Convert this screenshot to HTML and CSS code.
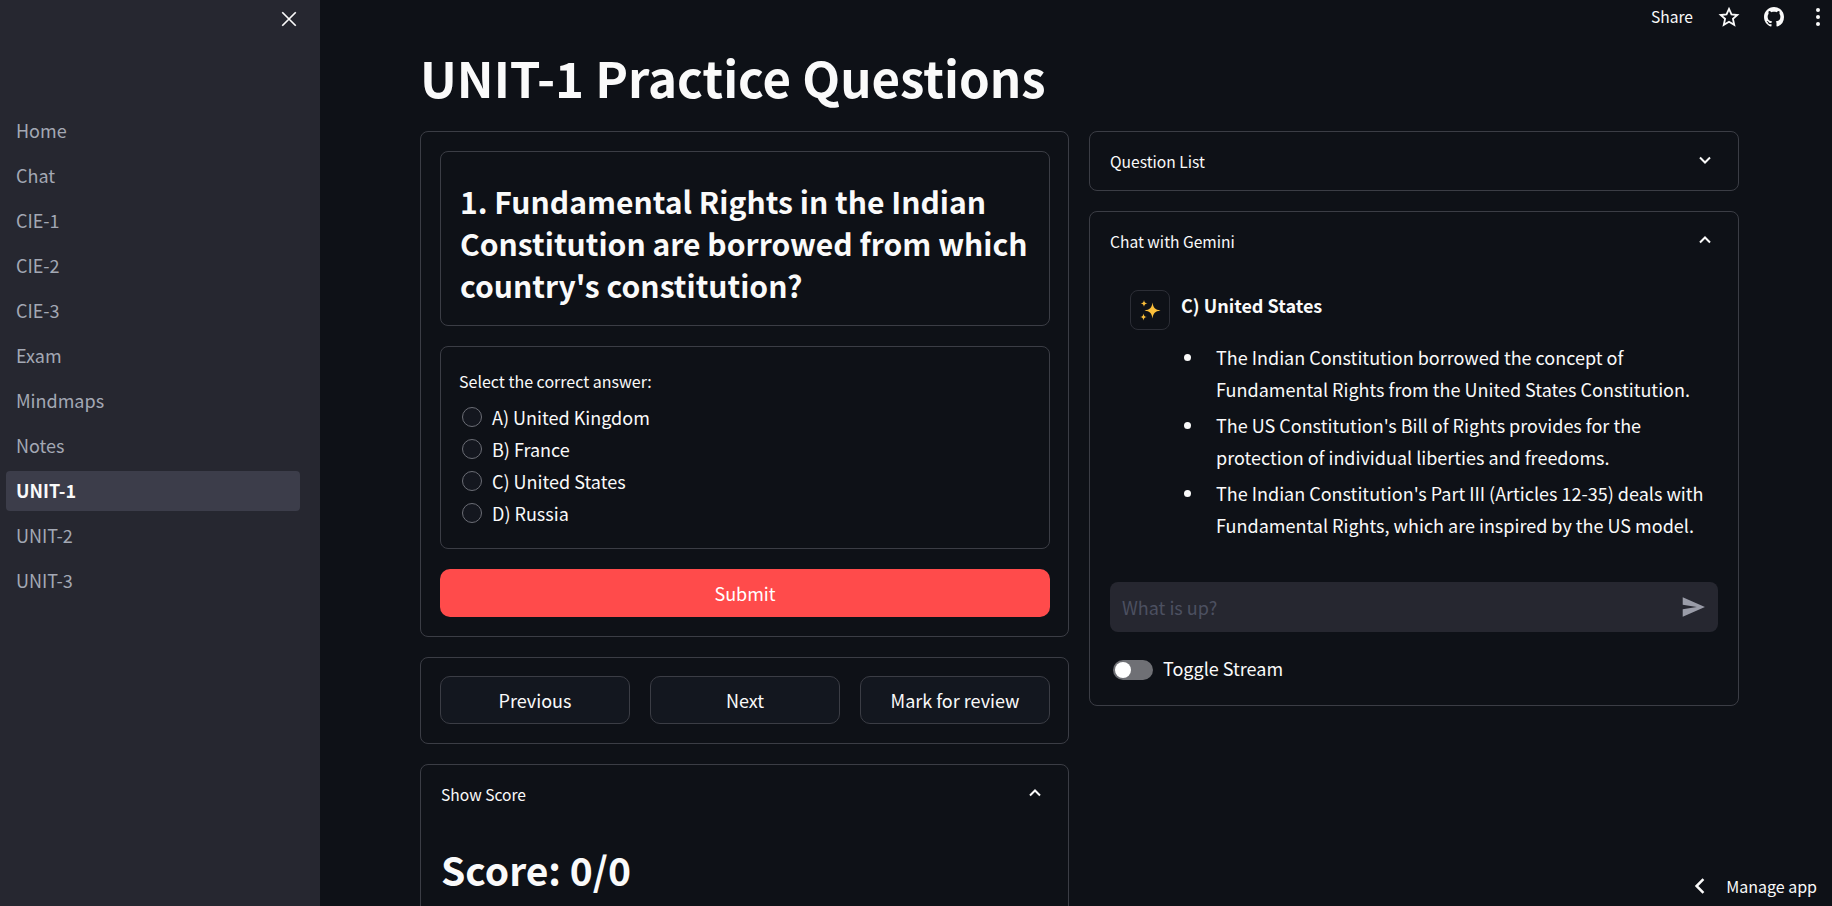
FILE: index.html
```html
<!DOCTYPE html>
<html lang="en">
<head>
    <meta charset="UTF-8">
    <title>UNIT-1 Practice Questions</title>
    <link rel="stylesheet" href="styles.css">
</head>
<body>

    <!-- Sidebar -->
    <aside class="sidebar">
        <div class="sidebar-top">
            <svg class="close-icon" viewBox="0 0 16 16"><path d="M2 2 L14 14 M14 2 L2 14"/></svg>
        </div>
        <nav class="nav">
            <a class="nav-item">Home</a>
            <a class="nav-item">Chat</a>
            <a class="nav-item">CIE-1</a>
            <a class="nav-item">CIE-2</a>
            <a class="nav-item">CIE-3</a>
            <a class="nav-item">Exam</a>
            <a class="nav-item">Mindmaps</a>
            <a class="nav-item">Notes</a>
            <a class="nav-item active">UNIT-1</a>
            <a class="nav-item">UNIT-2</a>
            <a class="nav-item">UNIT-3</a>
        </nav>
    </aside>

    <!-- Top right toolbar -->
    <div class="toolbar">
        <span class="share">Share</span>
        <svg class="star-icon" viewBox="0 0 24 24"><path d="M12 3.2l2.7 5.9 6.4.7-4.8 4.3 1.4 6.4L12 17.2l-5.7 3.3 1.4-6.4-4.8-4.3 6.4-.7z"/></svg>
        <svg class="github-icon" viewBox="0 0 16 16"><path d="M8 0C3.58 0 0 3.58 0 8c0 3.54 2.29 6.53 5.47 7.59.4.07.55-.17.55-.38 0-.19-.01-.82-.01-1.49-2.01.37-2.53-.49-2.69-.94-.09-.23-.48-.94-.82-1.13-.28-.15-.68-.52-.01-.53.63-.01 1.08.58 1.23.82.72 1.21 1.87.87 2.33.66.07-.52.28-.87.51-1.07-1.78-.2-3.64-.89-3.64-3.95 0-.87.31-1.59.82-2.15-.08-.2-.36-1.02.08-2.12 0 0 .67-.21 2.2.82.64-.18 1.32-.27 2-.27.68 0 1.36.09 2 .27 1.53-1.04 2.2-.82 2.2-.82.44 1.1.16 1.92.08 2.12.51.56.82 1.27.82 2.15 0 3.07-1.87 3.75-3.65 3.95.29.25.54.73.54 1.48 0 1.07-.01 1.93-.01 2.2 0 .21.15.46.55.38A8.013 8.013 0 0016 8c0-4.42-3.58-8-8-8z"/></svg>
        <span class="kebab"><i></i><i></i><i></i></span>
    </div>

    <!-- Main -->
    <main class="main">
        <h1 class="title">UNIT-1 Practice Questions</h1>
        <div class="columns">

            <div class="column">
                <section class="box stack">
                    <div class="box question">
                        <h2>1. Fundamental Rights in the Indian Constitution are borrowed from which country's constitution?</h2>
                    </div>
                    <div class="box options">
                        <p class="options-label">Select the correct answer:</p>
                        <label class="option"><span class="radio"></span>A) United Kingdom</label>
                        <label class="option"><span class="radio"></span>B) France</label>
                        <label class="option"><span class="radio"></span>C) United States</label>
                        <label class="option"><span class="radio"></span>D) Russia</label>
                    </div>
                    <button class="submit">Submit</button>
                </section>

                <section class="box nav-buttons">
                    <button class="btn">Previous</button>
                    <button class="btn">Next</button>
                    <button class="btn">Mark for review</button>
                </section>

                <section class="box expander">
                    <div class="expander-head">
                        <span>Show Score</span>
                        <svg class="chevron" viewBox="0 0 16 16"><path d="M3 10.5 L8 5.5 L13 10.5"/></svg>
                    </div>
                    <h2 class="score">Score: 0/0</h2>
                </section>
            </div>

            <div class="column">
                <section class="box expander">
                    <div class="expander-head">
                        <span>Question List</span>
                        <svg class="chevron" viewBox="0 0 16 16"><path d="M3 5.5 L8 10.5 L13 5.5"/></svg>
                    </div>
                </section>

                <section class="box expander chat">
                    <div class="expander-head">
                        <span>Chat with Gemini</span>
                        <svg class="chevron" viewBox="0 0 16 16"><path d="M3 10.5 L8 5.5 L13 10.5"/></svg>
                    </div>
                    <div class="message">
                        <div class="avatar">
                            <svg viewBox="0 0 24 24">
                                <path d="M14.5 4.5 C15.4 10 17 11.6 22.5 12.5 C17 13.4 15.4 15 14.5 20.5 C13.6 15 12 13.4 6.5 12.5 C12 11.6 13.6 10 14.5 4.5Z"/>
                                <path d="M6 2 C6.4 4.4 7 5 9.4 5.4 C7 5.8 6.4 6.4 6 8.8 C5.6 6.4 5 5.8 2.6 5.4 C5 5 5.6 4.4 6 2Z"/>
                                <path d="M5.5 15.5 C5.9 18 6.5 18.6 9 19 C6.5 19.4 5.9 20 5.5 22.5 C5.1 20 4.5 19.4 2 19 C4.5 18.6 5.1 18 5.5 15.5Z"/>
                            </svg>
                        </div>
                        <div class="message-body">
                            <p class="answer">C) United States</p>
                            <ul class="points">
                                <li>The Indian Constitution borrowed the concept of Fundamental Rights from the United States Constitution.</li>
                                <li>The US Constitution's Bill of Rights provides for the protection of individual liberties and freedoms.</li>
                                <li>The Indian Constitution's Part III (Articles 12-35) deals with Fundamental Rights, which are inspired by the US model.</li>
                            </ul>
                        </div>
                    </div>
                    <div class="chat-input">
                        <span class="placeholder">What is up?</span>
                        <svg class="send-icon" viewBox="0 0 24 24"><path d="M2.5 21 L23 12 L2.5 3 L2.5 10 L15.5 12 L2.5 14Z"/></svg>
                    </div>
                    <div class="toggle-row">
                        <span class="toggle"><i></i></span>
                        <span class="toggle-label">Toggle Stream</span>
                    </div>
                </section>
            </div>

        </div>
    </main>

    <!-- Manage app -->
    <div class="manage">
        <svg class="manage-icon" viewBox="0 0 16 16"><path d="M10.5 3 L5.5 8 L10.5 13"/></svg>
        <span>Manage app</span>
    </div>

</body>
</html>
```

FILE: styles.css
```css
* {
    box-sizing: border-box;
    margin: 0;
    padding: 0;
}

body {
    font-family: "Noto Sans CJK SC", "Noto Sans", sans-serif;
    background-color: #0e1117;
    color: #fafafa;
    height: 100vh;
    overflow: hidden;
    display: flex;
}

/* sidebar */
.sidebar {
    width: 320px;
    flex-shrink: 0;
    background-color: #262730;
    padding: 0 6px;
}

.sidebar-top {
    height: 111px;
    display: flex;
    justify-content: flex-end;
    padding: 10px 16px 0 0;
}

.close-icon {
    width: 18px;
    height: 18px;
    fill: none;
    stroke: #fafafa;
    stroke-width: 1.5;
}

.nav {
    display: flex;
    flex-direction: column;
    gap: 5px;
    width: 294px;
}

.nav-item {
    height: 40px;
    line-height: 38px;
    padding-left: 10px;
    font-size: 18px;
    color: #a3a8b4;
    border-radius: 4px;
}

.nav-item.active {
    background-color: #3c3d4a;
    color: #fafafa;
    font-weight: 700;
}

/* toolbar */
.toolbar {
    position: absolute;
    top: 0;
    right: 0;
    height: 33px;
    display: flex;
    align-items: center;
    font-size: 15.6px;
    line-height: 20px;
}

.share {
    margin: -2px 25px 0 0;
}

.star-icon {
    width: 22px;
    height: 22px;
    fill: none;
    stroke: #fafafa;
    stroke-width: 2;
    margin-right: 24px;
}

.github-icon {
    width: 20px;
    height: 20px;
    fill: #fafafa;
    margin-right: 32px;
}

.kebab {
    display: flex;
    flex-direction: column;
    gap: 3px;
    margin-right: 12px;
}

.kebab i {
    width: 4px;
    height: 4px;
    border-radius: 50%;
    background-color: #fafafa;
}

/* main area */
.main {
    flex: 1;
    padding: 41px 93px 0 100px;
    min-width: 0;
}

.title {
    font-size: 49.2px;
    line-height: 72px;
    font-weight: 700;
    margin-bottom: 18px;
}

.columns {
    display: grid;
    grid-template-columns: 649px 650px;
    gap: 20px;
}

.column {
    display: flex;
    flex-direction: column;
    gap: 20px;
}

.box {
    border: 1px solid #3b3d45;
    border-radius: 8px;
}

.stack {
    padding: 19px 18px 19px 19px;
    display: flex;
    flex-direction: column;
    gap: 20px;
}

.question {
    padding: 28px 16px 19px 19px;
}

.question h2 {
    font-size: 30.1px;
    line-height: 42px;
    font-weight: 600;
}

.options {
    padding: 23px 16px 16px 18px;
    height: 203px;
}

.options-label {
    font-size: 16px;
    line-height: 22px;
    margin-bottom: 9px;
}

.option {
    display: flex;
    align-items: center;
    height: 32px;
    font-size: 18px;
}

.radio {
    width: 20px;
    height: 20px;
    border: 1px solid #6b6d75;
    border-radius: 50%;
    margin: 0 10px 0 3px;
    background-color: #14171f;
}

.submit {
    height: 48px;
    border: none;
    border-radius: 10px;
    background-color: #ff4b4b;
    color: #fff;
    font-family: inherit;
    font-size: 18px;
}

.nav-buttons {
    padding: 18px 18px 19px 19px;
    display: grid;
    grid-template-columns: repeat(3, 1fr);
    gap: 20px;
}

.btn {
    height: 48px;
    border: 1px solid #3b3d45;
    border-radius: 10px;
    background-color: #13171f;
    color: #fafafa;
    font-family: inherit;
    font-size: 18px;
}

/* expanders */
.expander-head {
    height: 58px;
    padding: 0 20px 1px;
    display: flex;
    align-items: center;
    justify-content: space-between;
    font-size: 15.6px;
}

.chevron {
    width: 16px;
    height: 16px;
    fill: none;
    stroke: #fafafa;
    stroke-width: 2;
    margin: -1px 5px 0 0;
}

.score {
    font-size: 39px;
    line-height: 60px;
    font-weight: 600;
    padding: 16px 20px 20px;
}

/* chat */
.chat {
    height: 495px;
}

.message {
    display: flex;
    gap: 11px;
    padding: 20px 30px 0 40px;
}

.avatar {
    width: 40px;
    height: 40px;
    flex-shrink: 0;
    border: 1px solid #2c2e36;
    border-radius: 8px;
    display: flex;
    align-items: center;
    justify-content: center;
}

.avatar svg {
    width: 24px;
    height: 24px;
    fill: #fbbf3a;
}

.message-body {
    font-size: 18px;
    line-height: 32.4px;
    min-width: 0;
}

.answer {
    font-weight: 700;
    margin-bottom: 21px;
    line-height: 30px;
}

.points {
    padding-left: 35px;
    list-style: none;
}

.points li {
    position: relative;
    margin-bottom: 3px;
}

.points li::before {
    content: "";
    position: absolute;
    left: -32px;
    top: 13px;
    width: 7px;
    height: 7px;
    border-radius: 50%;
    background-color: #fafafa;
}

.chat-input {
    margin: 38px 20px 0;
    height: 50px;
    border-radius: 8px;
    background-color: #262730;
    display: flex;
    align-items: center;
    justify-content: space-between;
    padding: 0 12px;
    font-size: 18px;
}

.placeholder {
    color: #4c5060;
}

.send-icon {
    width: 26px;
    height: 26px;
    fill: #9a9ca8;
}

.toggle-row {
    display: flex;
    align-items: center;
    gap: 10px;
    margin: 28px 23px 0;
    font-size: 18px;
    line-height: 20px;
}

.toggle {
    width: 40px;
    height: 20px;
    border-radius: 10px;
    background-color: #6f7075;
    padding: 2px;
}

.toggle i {
    display: block;
    width: 16px;
    height: 16px;
    border-radius: 50%;
    background-color: #fff;
}

.toggle-label {
    margin-top: -4px;
}

/* manage app */
.manage {
    position: absolute;
    right: 15px;
    bottom: 9px;
    display: flex;
    align-items: center;
    gap: 15px;
    font-size: 16px;
    line-height: 22px;
}

.manage-icon {
    width: 22px;
    height: 22px;
    fill: none;
    stroke: #fafafa;
    stroke-width: 1.8;
}
```
